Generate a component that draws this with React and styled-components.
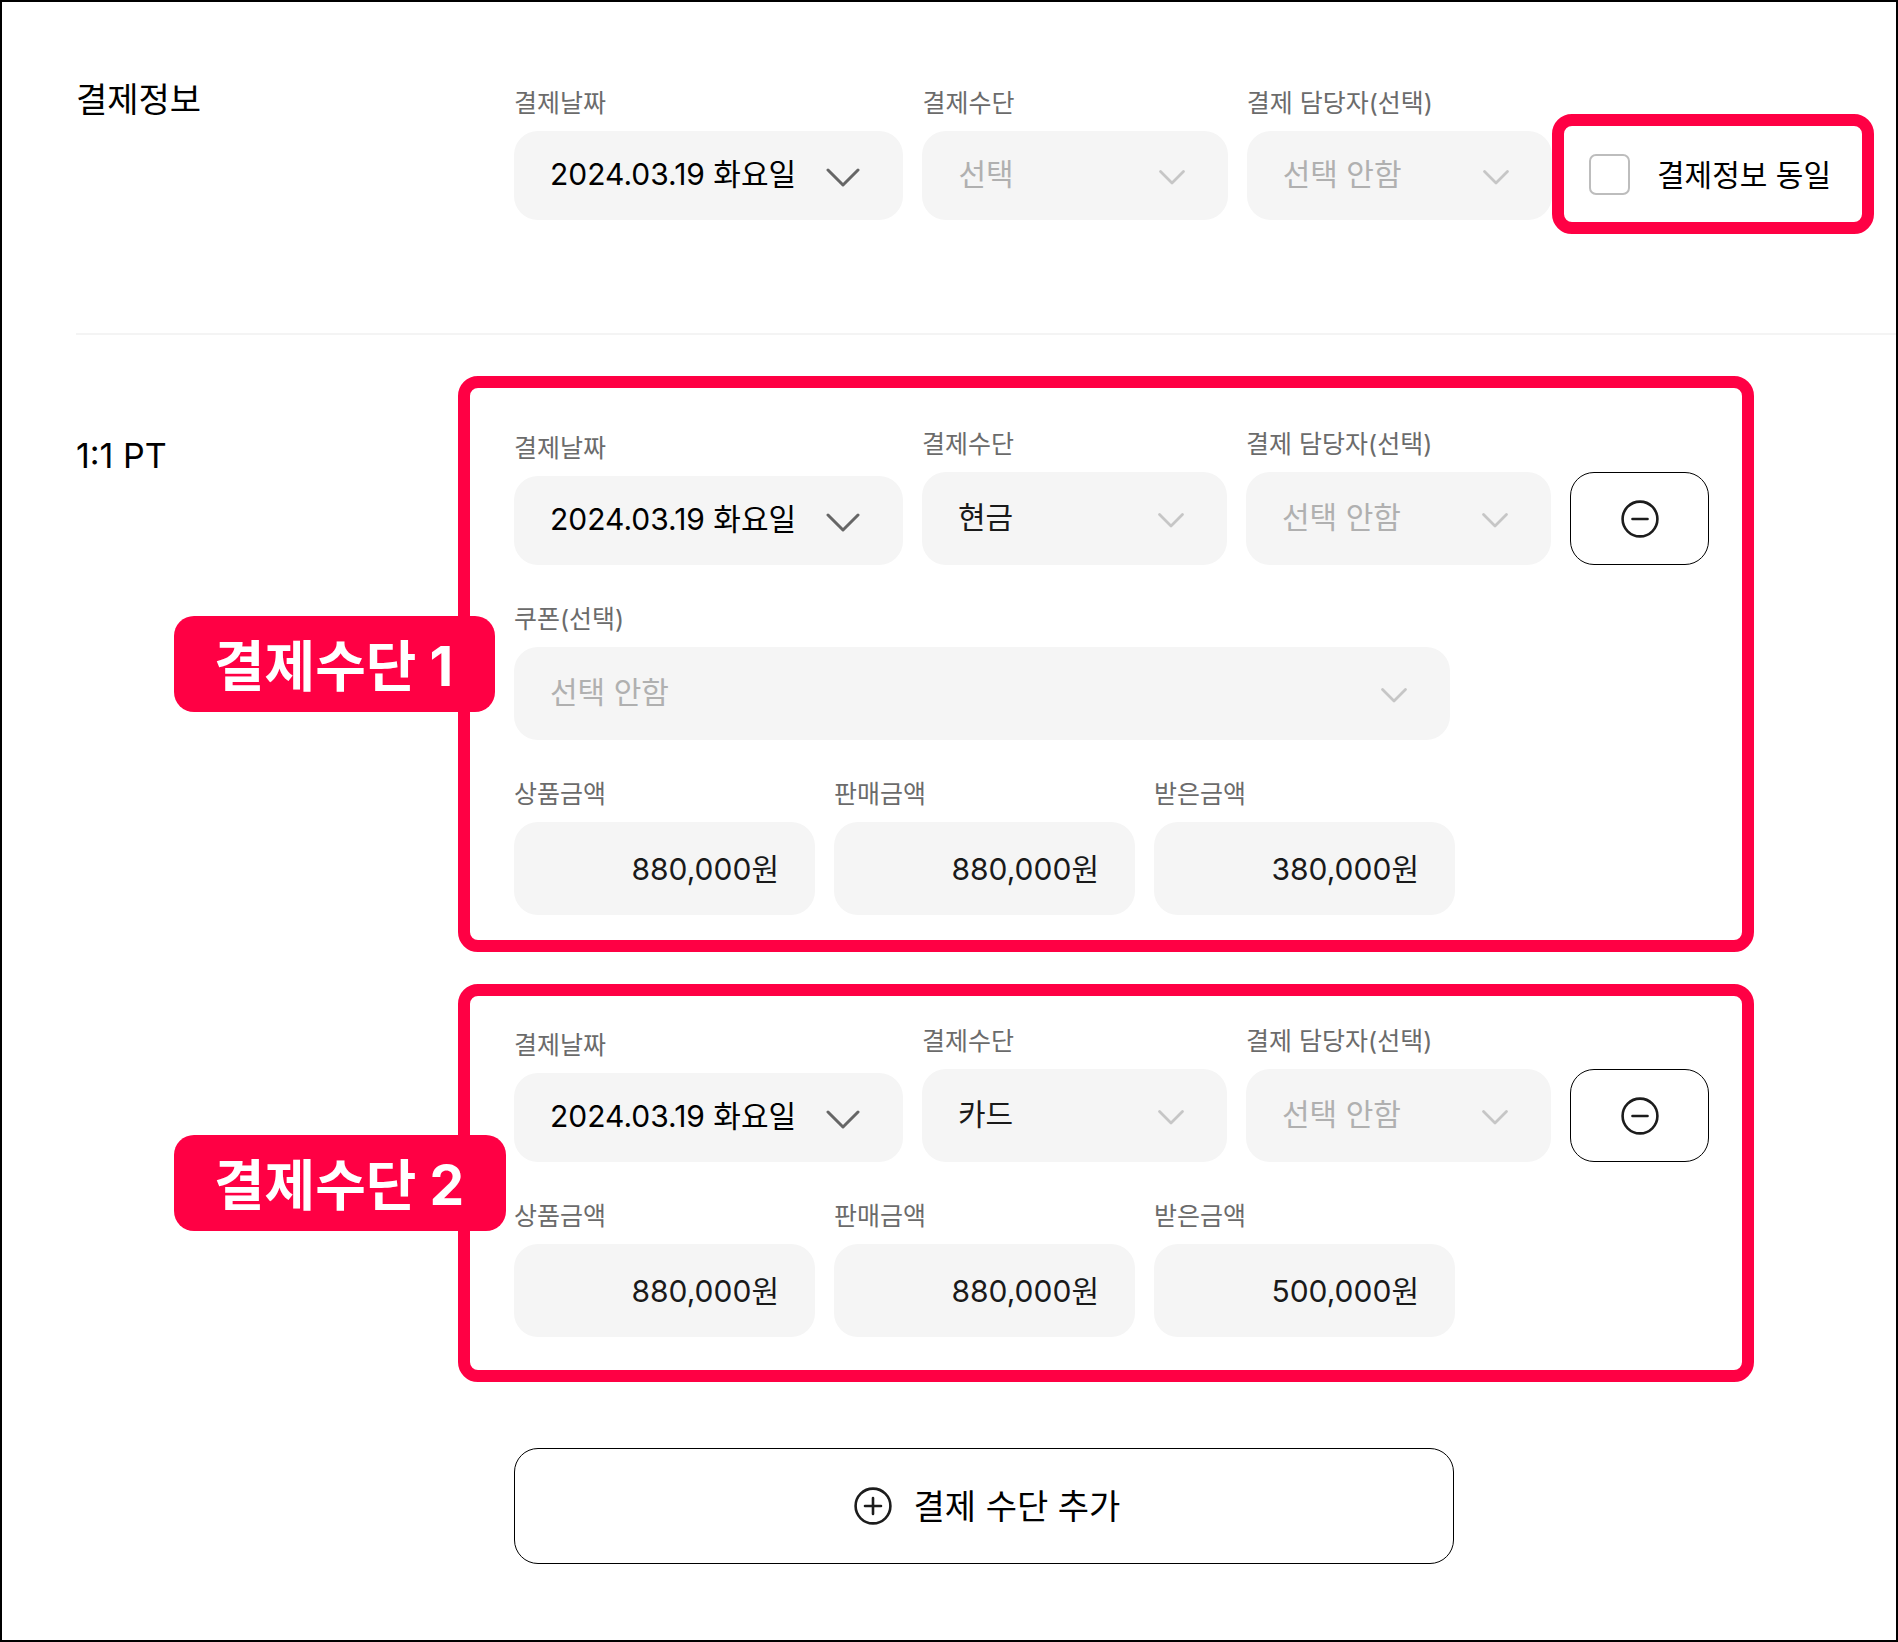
import React, { useId } from "react";
import styled, { createGlobalStyle } from "styled-components";

const GlobalStyle = createGlobalStyle`
  *, *::before, *::after { box-sizing: border-box; }
  body {
    margin: 0;
    background: #fff;
    color: #000;
    font-family: Inter, "Noto Sans CJK KR", sans-serif;
    font-weight: 400;
  }
  input, select, button { font-family: inherit; font-weight: inherit; }
`;

const ACCENT = "#ff0044";

const Page = styled.main`
  min-height: 100vh;
  border: 2px solid #000;
  padding-left: 74px;
  padding-bottom: 76px;
`;

const Section = styled.section`
  display: grid;
  grid-template-columns: 382px minmax(0, 1fr);
`;

const SummarySection = styled(Section)`
  padding: 78px 22px 99px 0;
`;

const Divider = styled.hr`
  height: 2px;
  margin: 0;
  border: 0;
  background: #f4f4f4;
`;

const ProductSection = styled(Section)`
  padding: 41px 142px 0 0;
`;

const Title = styled.h2`
  margin: 0;
  padding-top: ${(p) => (p.$inset ? "60px" : "0")};
  font-size: 34px;
  line-height: 40px;
  font-weight: 400;
`;

const SummaryRow = styled.div`
  display: flex;
  align-items: flex-end;
  padding-left: 56px;
`;

const SummaryFields = styled.div`
  flex: 1;
  display: grid;
  grid-template-columns: minmax(0, 389fr) repeat(2, minmax(0, 305fr));
  gap: 19px;
  padding: 7px 0 14px;
`;

const SameInfo = styled.label`
  display: flex;
  align-items: center;
  gap: 27px;
  width: 322px;
  height: 120px;
  padding: 0 0 2px 25px;
  border: 12px solid ${ACCENT};
  border-radius: 20px;
  font-size: 30px;
  white-space: nowrap;
`;

const Checkbox = styled.input`
  appearance: none;
  width: 41px;
  height: 41px;
  margin: 2px 0 0;
  border: 2px solid #bdbdbd;
  border-radius: 7px;
  background: #fff;
`;

const Cards = styled.div`
  display: flex;
  flex-direction: column;
  gap: 32px;
`;

const Card = styled.article`
  position: relative;
  display: flex;
  flex-direction: column;
  gap: 38px;
  padding: ${(p) => (p.$compact ? "29px 33px 33px 44px" : "40px 33px 25px 44px")};
  border: 12px solid ${ACCENT};
  border-radius: 20px;
`;

const Badge = styled.strong`
  position: absolute;
  left: -296px;
  top: 0;
  bottom: 0;
  height: 96px;
  margin: auto 0;
  padding: 4px 42px 0 40px;
  border-radius: 20px;
  background: ${ACCENT};
  color: #fff;
  font-size: 55px;
  line-height: 92px;
  font-weight: 700;
  white-space: nowrap;
`;

const MethodRow = styled.div`
  display: grid;
  grid-template-columns: minmax(0, 389fr) repeat(2, minmax(0, 305fr)) minmax(0, 139fr);
  gap: 19px;
  align-items: end;
`;

const CouponRow = styled.div`
  max-width: 936px;
`;

const PriceRow = styled.div`
  display: grid;
  grid-template-columns: repeat(3, minmax(0, 1fr));
  gap: 19px;
  max-width: 941px;
`;

const Field = styled.div`
  display: flex;
  flex-direction: column;
  gap: 12px;
`;

const Label = styled.label`
  color: #6b6b6b;
  font-size: 25px;
  line-height: 32px;
  white-space: nowrap;
`;

const SelectWrap = styled.div`
  display: grid;
  align-items: center;
  > * { grid-area: 1 / 1; }
`;

const Select = styled.select`
  appearance: none;
  width: 100%;
  height: ${(p) => (p.$short ? "89px" : "93px")};
  padding: 0 36px 3px;
  border: 0;
  border-radius: 24px;
  background: #f5f5f5;
  color: ${(p) => p.$color};
  font-size: 30px;
  opacity: 1;
`;

const Chevron = styled.svg`
  justify-self: end;
  width: ${(p) => (p.$strong ? "34px" : "26px")};
  margin-right: ${(p) => (p.$strong ? "43px" : "43px")};
  margin-top: 4px;
  fill: none;
  stroke: ${(p) => (p.$strong ? "#666" : "#c6c6c6")};
  stroke-width: ${(p) => (p.$strong ? 3 : 3.6)};
  stroke-linecap: round;
  stroke-linejoin: round;
  pointer-events: none;
`;

const PriceInput = styled.input`
  width: 100%;
  height: 93px;
  padding: 0 36px 4px;
  border: 0;
  border-radius: 24px;
  background: #f5f5f5;
  color: #1a1a1a;
  font-size: 30px;
  text-align: right;
`;

const OutlineButton = styled.button`
  display: flex;
  align-items: center;
  justify-content: center;
  gap: 22px;
  padding: 0;
  border: 1px solid #000;
  border-radius: 24px;
  background: #fff;
  color: #000;
`;

const RemoveButton = styled(OutlineButton)`
  height: 93px;
`;

const AddButton = styled(OutlineButton)`
  width: calc(100% - 112px);
  max-width: 940px;
  height: 116px;
  margin: 34px 0 0 56px;
  padding-left: 6px;
  font-size: 34px;
`;

const ButtonText = styled.span`
  padding-bottom: 4px;
`;

const RoundIcon = styled.svg`
  width: 38px;
  height: 38px;
  fill: none;
  stroke: #1c1c1c;
  stroke-width: 2.6;
  stroke-linecap: round;
`;

function SelectField({ label, value, color = "#b0b0b0", short = false, strong = false }) {
  const id = useId();
  return (
    <Field>
      <Label htmlFor={id}>{label}</Label>
      <SelectWrap>
        <Select id={id} $color={color} $short={short} defaultValue={value}>
          <option>{value}</option>
        </Select>
        <Chevron $strong={strong} viewBox="0 0 34 20" aria-hidden="true">
          <path d="M2 2l15 15L32 2" />
        </Chevron>
      </SelectWrap>
    </Field>
  );
}

function DateField() {
  return <SelectField label="결제날짜" value="2024.03.19 화요일" color="#000" short strong />;
}

function PriceField({ label, value }) {
  const id = useId();
  return (
    <Field>
      <Label htmlFor={id}>{label}</Label>
      <PriceInput id={id} type="text" defaultValue={value} />
    </Field>
  );
}

function PaymentCard({ badge, method, coupon = false, received }) {
  return (
    <Card $compact={!coupon}>
      <Badge>{badge}</Badge>
      <MethodRow>
        <DateField />
        <SelectField label="결제수단" value={method} color="#1a1a1a" />
        <SelectField label="결제 담당자(선택)" value="선택 안함" />
        <RemoveButton type="button" aria-label="삭제">
          <RoundIcon viewBox="0 0 38 38" aria-hidden="true">
            <circle cx="19" cy="19" r="17.4" />
            <path d="M11.5 19h15" />
          </RoundIcon>
        </RemoveButton>
      </MethodRow>
      {coupon && (
        <CouponRow>
          <SelectField label="쿠폰(선택)" value="선택 안함" />
        </CouponRow>
      )}
      <PriceRow>
        <PriceField label="상품금액" value="880,000원" />
        <PriceField label="판매금액" value="880,000원" />
        <PriceField label="받은금액" value={received} />
      </PriceRow>
    </Card>
  );
}

export default function App() {
  return (
    <>
      <GlobalStyle />
      <Page>
        <SummarySection>
          <Title>결제정보</Title>
          <SummaryRow>
            <SummaryFields>
              <DateField />
              <SelectField label="결제수단" value="선택" short />
              <SelectField label="결제 담당자(선택)" value="선택 안함" short />
            </SummaryFields>
            <SameInfo>
              <Checkbox type="checkbox" />
              결제정보 동일
            </SameInfo>
          </SummaryRow>
        </SummarySection>
        <Divider />
        <ProductSection>
          <Title $inset>1:1 PT</Title>
          <Cards>
            <PaymentCard badge="결제수단 1" method="현금" coupon received="380,000원" />
            <PaymentCard badge="결제수단 2" method="카드" received="500,000원" />
            <AddButton type="button">
              <RoundIcon viewBox="0 0 38 38" aria-hidden="true">
                <circle cx="19" cy="19" r="17.4" />
                <path d="M11 19h16M19 11v16" />
              </RoundIcon>
              <ButtonText>결제 수단 추가</ButtonText>
            </AddButton>
          </Cards>
        </ProductSection>
      </Page>
    </>
  );
}
